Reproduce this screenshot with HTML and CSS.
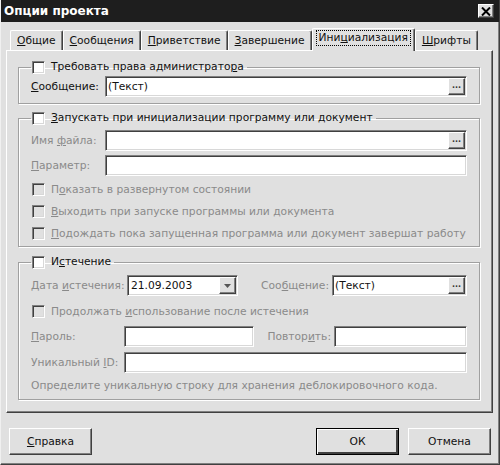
FILE: index.html
```html
<!DOCTYPE html>
<html lang="ru">
<head>
  <meta charset="UTF-8" />
  <title>Опции проекта</title>
  <link rel="stylesheet" href="styles.css">
</head>
<body>
  <div class="window">
    <div class="titlebar">
      <span class="title">Опции проекта</span>
      <div class="close">
        <svg viewBox="0 0 10 9" width="10" height="9">
          <path d="M1 0.5 L9 8.5 M9 0.5 L1 8.5" stroke="#000" stroke-width="2"/>
        </svg>
      </div>
    </div>

    <div class="tabs">
      <div class="tab"><u>О</u>бщие</div>
      <div class="tab"><u>С</u>ообщения</div>
      <div class="tab"><u>П</u>риветствие</div>
      <div class="tab"><u>З</u>авершение</div>
      <div class="tab active"><span class="focus">Ини<u>ц</u>иализация</span></div>
      <div class="tab"><u>Ш</u>рифты</div>
    </div>

    <div class="panel">
      <!-- права администратора -->
      <fieldset class="group g1">
        <legend><span class="check"></span><span>Требовать права администрато<u>р</u>а</span></legend>
        <div class="row r-msg">
          <span class="lbl w1"><u>С</u>ообщение:</span>
          <div class="field grow"><span class="val">(Текст)</span><span class="dots">...</span></div>
        </div>
      </fieldset>

      <!-- запуск программы -->
      <fieldset class="group g2">
        <legend><span class="check"></span><span><u>З</u>апускать при инициализации программу или документ</span></legend>
        <div class="row r-file">
          <span class="lbl w1 off">Имя <u>ф</u>айла:</span>
          <div class="field grow"><span class="val"></span><span class="dots">...</span></div>
        </div>
        <div class="row r-param">
          <span class="lbl w1 off"><u>П</u>араметр:</span>
          <div class="field grow"></div>
        </div>
        <div class="opt off first"><span class="check dis"></span><span>П<u>о</u>казать в развернутом состоянии</span></div>
        <div class="opt off"><span class="check dis"></span><span><u>В</u>ыходить при запуске программы или документа</span></div>
        <div class="opt off"><span class="check dis"></span><span><u>П</u>одождать пока запущенная программа или документ завершат работу</span></div>
      </fieldset>

      <!-- истечение -->
      <fieldset class="group g3">
        <legend><span class="check"></span><span>И<u>с</u>течение</span></legend>
        <div class="row r-date">
          <span class="lbl w2 off">Дата <u>и</u>стечения:</span>
          <div class="field combo"><span class="val">21.09.2003</span>
            <span class="drop">
              <svg viewBox="0 0 7 4" width="7" height="4"><polygon points="0,0 7,0 3.5,4" fill="#555"/></svg>
            </span>
          </div>
          <span class="lbl w3 off right">Соо<u>б</u>щение:</span>
          <div class="field grow"><span class="val">(Текст)</span><span class="dots">...</span></div>
        </div>
        <div class="opt off r-cont"><span class="check dis"></span><span>Продолжать <u>и</u>спользование после истечения</span></div>
        <div class="row r-pass">
          <span class="lbl w2 off"><u>П</u>ароль:</span>
          <div class="field pass"></div>
          <span class="lbl w4 off right">Повтор<u>и</u>ть:</span>
          <div class="field grow"></div>
        </div>
        <div class="row r-uid">
          <span class="lbl w2 off">Уникальный <u>I</u>D:</span>
          <div class="field grow"></div>
        </div>
        <div class="hint off">Определите уникальную строку для хранения деблокировочного кода.</div>
      </fieldset>
    </div>

    <div class="footer">
      <div class="btn"><span><u>С</u>правка</span></div>
      <div class="spacer"></div>
      <div class="btn default">ОК</div>
      <div class="btn">Отмена</div>
    </div>
  </div>
</body>
</html>
```

FILE: styles.css
```css
:root {
  --face: #e0e0e0;
  --shadow: #808080;
  --dark: #404040;
  --light: #ffffff;
  --grey-text: #8a8a8a;
  --text: #111111;
}

body {
  margin: 0;
  font-family: 'DejaVu Sans', sans-serif;
  font-size: 10.7px;
  color: var(--text);
  background: var(--face);
}

u {
  text-decoration: underline;
  text-underline-offset: 1px;
}

.window {
  width: 500px;
  height: 465px;
  box-sizing: border-box;
  background: var(--face);
  border-left: 1px solid #f0f0f0;
  border-right: 1px solid var(--dark);
  border-bottom: 1px solid var(--dark);
  box-shadow: inset -1px -1px 0 var(--shadow);
  display: flex;
  flex-direction: column;
}

/* заголовок окна */
.titlebar {
  height: 22px;
  background: #1e1e1e;
  display: flex;
  align-items: center;
  justify-content: space-between;
  padding: 0 5px 0 3px;
}

.title {
  color: #fff;
  font-weight: bold;
  font-size: 12px;
}

.close {
  width: 16px;
  height: 14px;
  box-sizing: border-box;
  background: var(--face);
  border: 1px solid;
  border-color: var(--light) var(--dark) var(--dark) var(--light);
  box-shadow: inset -1px -1px 0 var(--shadow);
  display: flex;
  align-items: center;
  justify-content: center;
}

/* вкладки */
.tabs {
  display: flex;
  align-items: flex-end;
  height: 22px;
  margin-top: 6px;
  padding-left: 9px;
  position: relative;
  z-index: 1;
}

.tab {
  height: 20px;
  box-sizing: border-box;
  padding: 3px 6px 0 6px;
  border-top: 1px solid var(--light);
  border-left: 1px solid var(--light);
  border-right: 1px solid var(--dark);
  border-radius: 2px 2px 0 0;
  box-shadow: inset -1px 0 0 var(--shadow);
  white-space: nowrap;
}

.tab.active {
  height: 23px;
  margin-bottom: -1px;
  background: var(--face);
  padding: 2px 4px 0 4px;
}

.focus {
  display: inline-block;
  padding: 0 2px 1px 2px;
  outline: 1px dotted #000;
}

/* рабочая панель */
.panel {
  width: 487px;
  height: 363px;
  margin-left: 5px;
  box-sizing: border-box;
  border: 1px solid;
  border-color: var(--light) var(--dark) var(--dark) var(--light);
  box-shadow: inset -1px -1px 0 var(--shadow);
  padding: 0 12px 0 11px;
}

.group {
  margin: 0;
  min-width: 0;
  padding: 0 12px;
  border: 1px solid #a0a0a0;
  box-shadow: inset 1px 1px 0 var(--light), 1px 1px 0 var(--light);
}

.group legend {
  display: flex;
  align-items: center;
  gap: 6px;
  padding: 0 3px 0 1px;
  height: 14px;
  line-height: 14px;
}

.g1 { margin-top: 9px; padding-bottom: 6px; }
.g2 { margin-top: 7px; padding-bottom: 2px; }
.g3 { margin-top: 8px; padding-bottom: 6px; }

.row {
  display: flex;
  align-items: center;
  height: 21px;
}

.r-msg { margin-top: 2px; }
.r-file { margin-top: 5px; }
.r-param { margin-top: 4px; }
.r-date { margin-top: 6px; }
.r-pass { margin-top: 4px; }
.r-uid { margin-top: 5px; }

.lbl {
  flex: none;
  white-space: nowrap;
}

.w1 { width: 74px; }
.w2 { width: 93px; }
.w3 { width: 91px; padding-right: 3px; }
.w4 { width: 77px; padding-right: 3px; }
.right { text-align: right; }

.off { color: var(--grey-text); }

/* поля ввода */
.field {
  height: 21px;
  box-sizing: border-box;
  background: #fff;
  border: 1px solid;
  border-color: var(--shadow) var(--light) var(--light) var(--shadow);
  box-shadow: inset 1px 1px 0 var(--dark), inset -1px -1px 0 #d8d8d8;
  padding: 1px;
  display: flex;
  align-items: center;
}

.grow { flex: 1; }
.combo { width: 111px; margin-left: 3px; }
.pass { width: 130px; }

.val {
  flex: 1;
  padding-left: 1px;
  white-space: nowrap;
}

.combo .val { padding-left: 2px; }

.dots, .drop {
  width: 17px;
  height: 17px;
  box-sizing: border-box;
  background: var(--face);
  border: 1px solid;
  border-color: var(--light) var(--dark) var(--dark) var(--light);
  box-shadow: inset -1px -1px 0 var(--shadow);
  display: flex;
  align-items: center;
  justify-content: center;
  font-size: 8px;
  font-weight: bold;
  line-height: 1;
  padding-bottom: 2px;
  color: #333;
}

.drop { padding-bottom: 0; }

/* флажки */
.check {
  flex: none;
  width: 13px;
  height: 13px;
  box-sizing: border-box;
  background: #fff;
  border: 1px solid;
  border-color: var(--shadow) var(--light) var(--light) var(--shadow);
  box-shadow: inset 1px 1px 0 var(--dark), inset -1px -1px 0 #d8d8d8;
}

.check.dis { background: var(--face); }

.opt {
  display: flex;
  align-items: center;
  gap: 6px;
  height: 22px;
  padding-left: 1px;
  white-space: nowrap;
}

.opt.first { margin-top: 2px; }
.r-cont { margin-top: 4px; }

.hint {
  margin-top: 6px;
  height: 14px;
  line-height: 14px;
}

/* кнопки внизу */
.footer {
  display: flex;
  padding: 15px 8px 0 8px;
  gap: 9px;
}

.spacer { flex: 1; }

.btn {
  width: 83px;
  height: 27px;
  box-sizing: border-box;
  border: 1px solid;
  border-color: var(--light) var(--dark) var(--dark) var(--light);
  box-shadow: inset -1px -1px 0 var(--shadow);
  display: flex;
  align-items: center;
  justify-content: center;
}

.btn.default {
  border: 1px solid #000;
  box-shadow: inset 1px 1px 0 var(--light), inset -2px -2px 0 var(--dark), inset -1px -1px 0 var(--shadow);
}
```
